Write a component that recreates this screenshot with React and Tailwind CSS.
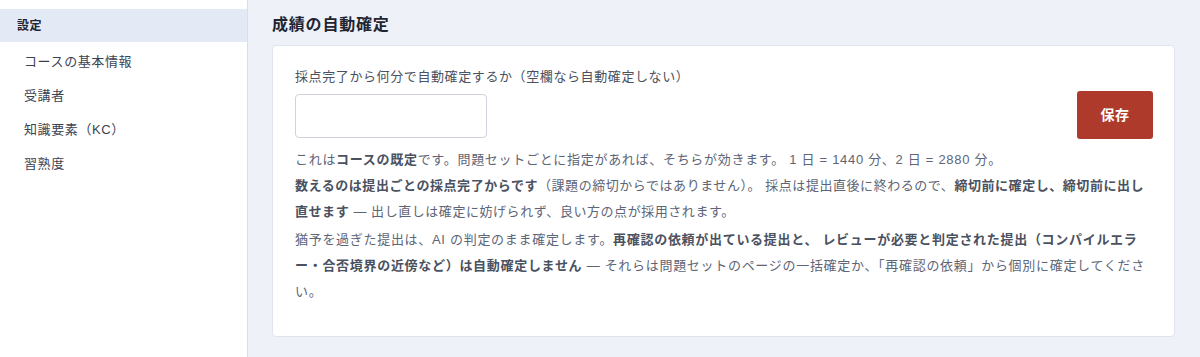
import React from "react";

const navItems = ["コースの基本情報", "受講者", "知識要素（KC）", "習熟度"];

export default function App() {
  return (
    <div
      className="flex w-[1200px] h-[357px] bg-[#eef1f8] text-[#333a48] overflow-hidden"
      style={{ fontFamily: '"Liberation Sans", "Noto Sans CJK JP", "Noto Sans", sans-serif' }}
    >
      {/* Sidebar */}
      <aside className="w-[248px] shrink-0 bg-white border-r border-[#d9dde6] pt-[9px]">
        <div className="h-[33px] flex items-center pl-[17px] bg-[#e3eaf6] text-[12px] font-bold text-[#1f2533] tracking-[0.4px]">
          設定
        </div>
        <ul className="mt-[3px]">
          {navItems.map((item) => (
            <li
              key={item}
              className="h-[34px] flex items-center pl-[24px] text-[13px] tracking-[0.6px] text-[#3b4252]"
            >
              {item}
            </li>
          ))}
        </ul>
      </aside>

      {/* Main */}
      <main className="flex-1 pl-[24px] pr-[25px]">
        <h2 className="mt-[13px] h-[24px] flex items-center text-[16px] font-bold tracking-[0.8px] text-[#1f2533]">
          成績の自動確定
        </h2>
        <section className="mt-[8px] bg-white border border-[#e0e4ec] rounded-[4px] pl-[22px] pr-[21px] pt-[21px] pb-[31px]">
          <div className="flex items-end justify-between">
            <div>
              <label className="block text-[13px] tracking-[0.6px] leading-[20px] text-[#4a5160]">
                採点完了から何分で自動確定するか（空欄なら自動確定しない）
              </label>
              <input
                type="text"
                className="mt-[7px] block w-[192px] h-[44px] border border-[#ced3de] rounded-[4px] bg-white px-3 outline-none"
              />
            </div>
            <button className="mb-[-1px] w-[76px] h-[48px] rounded-[3px] bg-[#ad3a2b] text-white text-[14px] font-bold tracking-[0.5px]">
              保存
            </button>
          </div>

          <div className="mt-[9px] pr-[4px] text-[13px] tracking-[0.7px] leading-[26px] text-[#5d6577]">
            <p>
              これは<b className="font-bold text-[#4a5160]">コースの既定</b>
              です。問題セットごとに指定があれば、そちらが効きます。 1 日 = 1440 分、2 日 = 2880 分。
            </p>
            <p className="tracking-[0.55px]">
              <b className="font-bold text-[#4a5160]">数えるのは提出ごとの採点完了からです</b>
              （課題の締切からではありません）。 採点は提出直後に終わるので、
              <b className="font-bold text-[#4a5160]">締切前に確定し、締切前に出し直せます</b>
              {" "}— 出し直しは確定に妨げられず、良い方の点が採用されます。
            </p>
            <p className="mt-[2px]">
              猶予を過ぎた提出は、AI の判定のまま確定します。
              <b className="font-bold text-[#4a5160]">
                再確認の依頼が出ている提出と、 レビューが必要と判定された提出（コンパイルエラー・合否境界の近傍など）は自動確定しません
              </b>
              {" "}— それらは問題セットのページの一括確定か、「再確認の依頼」から個別に確定してください。
            </p>
          </div>
        </section>
      </main>
    </div>
  );
}
